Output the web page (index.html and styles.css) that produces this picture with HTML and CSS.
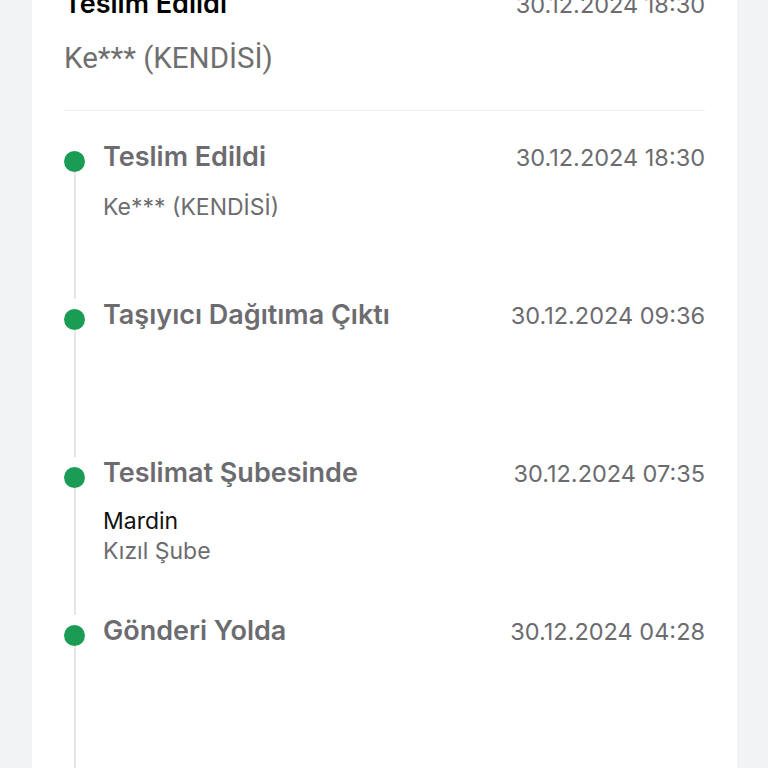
FILE: index.html
```html
<!DOCTYPE html>
<html lang="tr">
<head>
  <meta charset="UTF-8" />
  <meta name="viewport" content="width=device-width, initial-scale=1" />
  <title>Gönderi Takibi</title>
  <link rel="stylesheet" href="styles.css">
</head>
<body>

<div class="page">
  <main class="card">
    <section class="summary">
      <div class="summary-head">
        <h2>Teslim Edildi</h2>
        <span class="date">30.12.2024 18:30</span>
      </div>
      <div class="summary-sub">Ke*** (KENDİSİ)</div>
    </section>

    <ul class="timeline">
      <li class="step">
        <div class="rail"><span class="dot"></span><span class="line"></span></div>
        <div class="step-body">
          <div class="step-head">
            <h3>Teslim Edildi</h3>
            <span class="date">30.12.2024 18:30</span>
          </div>
          <div class="step-note">Ke*** (KENDİSİ)</div>
        </div>
      </li>
      <li class="step">
        <div class="rail"><span class="dot"></span><span class="line"></span></div>
        <div class="step-body">
          <div class="step-head">
            <h3>Taşıyıcı Dağıtıma Çıktı</h3>
            <span class="date">30.12.2024 09:36</span>
          </div>
        </div>
      </li>
      <li class="step">
        <div class="rail"><span class="dot"></span><span class="line"></span></div>
        <div class="step-body">
          <div class="step-head">
            <h3>Teslimat Şubesinde</h3>
            <span class="date">30.12.2024 07:35</span>
          </div>
          <div class="step-city">Mardin</div>
          <div class="step-branch">Kızıl Şube</div>
        </div>
      </li>
      <li class="step">
        <div class="rail"><span class="dot"></span><span class="line"></span></div>
        <div class="step-body">
          <div class="step-head">
            <h3>Gönderi Yolda</h3>
            <span class="date">30.12.2024 04:28</span>
          </div>
        </div>
      </li>
    </ul>
  </main>
</div>

</body>
</html>
```

FILE: styles.css
```css
* {
  box-sizing: border-box;
  font-family: 'Inter', 'Noto Sans', sans-serif;
}

html, body {
  margin: 0;
  height: 100%;
  overflow: hidden;
  background-color: #f2f3f5;
  color: #111;
}

.page {
  padding: 0 31px 0 32px;
  height: 100%;
}

.card {
  background-color: #fff;
  padding: 0 32px;
  margin-top: -12px;
  min-height: 800px;
}

.summary {
  padding-bottom: 36px;
  border-bottom: 1px solid #eeeeee;
}

.summary-head {
  display: flex;
  justify-content: space-between;
  align-items: baseline;
}

.summary-head h2 {
  margin: 0;
  font-size: 27px;
  line-height: 32px;
  font-weight: 600;
  color: #000;
}

.summary-sub {
  margin-top: 21px;
  font-family: 'Roboto', sans-serif;
  font-size: 29.5px;
  line-height: 32px;
  color: #6f6f6f;
}

.date {
  font-size: 23.5px;
  line-height: 32px;
  color: #6c6c70;
}

.timeline {
  list-style: none;
  margin: 0;
  padding: 30px 0 0 0;
}

.step {
  display: grid;
  grid-template-columns: 21px 1fr;
  column-gap: 18px;
  min-height: 158px;
}

.rail {
  display: flex;
  flex-direction: column;
  align-items: center;
}

.dot {
  width: 21px;
  height: 21px;
  margin-top: 10px;
  border-radius: 50%;
  background-color: #1a9c55;
  flex-shrink: 0;
}

.line {
  flex: 1;
  width: 2px;
  background-color: #e6e6e8;
}

.step-head {
  display: flex;
  justify-content: space-between;
  align-items: baseline;
}

.step-head h3 {
  margin: 0;
  font-size: 27px;
  line-height: 32px;
  font-weight: 600;
  color: #6c6c70;
}

.step-note {
  margin-top: 18px;
  font-size: 23px;
  line-height: 30px;
  color: #6c6c70;
}

.step-city {
  margin-top: 16px;
  font-size: 23px;
  line-height: 30px;
  color: #111;
}

.step-branch {
  margin-top: 0;
  font-size: 23px;
  line-height: 30px;
  color: #6c6c70;
}
```
